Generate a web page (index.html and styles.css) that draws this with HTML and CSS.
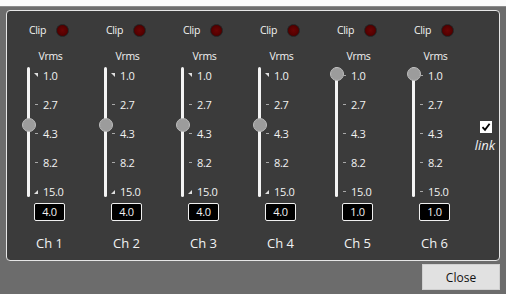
FILE: index.html
```html
<!DOCTYPE html>
<html lang="en">
<head>
    <meta charset="UTF-8">
    <title>Vrms Channels</title>
    <link rel="stylesheet" href="styles.css">
</head>
<body>
    <div class="titlebar"></div>
    <div class="frame">
        <div class="panel">
            <div class="channel">
                <div class="clip-row"><span class="clip">Clip</span><span class="led"></span></div>
                <div class="unit">Vrms</div>
                <div class="slider">
                    <div class="rail"><div class="track"></div><div class="thumb" style="top: 56px"></div></div>
                    <div class="scale">
                        <div class="tick"><span class="mark tri-top"></span><span>1.0</span></div>
                        <div class="tick"><span class="mark dash"></span><span>2.7</span></div>
                        <div class="tick"><span class="mark dash"></span><span>4.3</span></div>
                        <div class="tick"><span class="mark dash"></span><span>8.2</span></div>
                        <div class="tick"><span class="mark tri-bottom"></span><span>15.0</span></div>
                    </div>
                </div>
                <div class="value">4.0</div>
                <div class="name">Ch 1</div>
            </div>
            <div class="channel">
                <div class="clip-row"><span class="clip">Clip</span><span class="led"></span></div>
                <div class="unit">Vrms</div>
                <div class="slider">
                    <div class="rail"><div class="track"></div><div class="thumb" style="top: 56px"></div></div>
                    <div class="scale">
                        <div class="tick"><span class="mark tri-top"></span><span>1.0</span></div>
                        <div class="tick"><span class="mark dash"></span><span>2.7</span></div>
                        <div class="tick"><span class="mark dash"></span><span>4.3</span></div>
                        <div class="tick"><span class="mark dash"></span><span>8.2</span></div>
                        <div class="tick"><span class="mark tri-bottom"></span><span>15.0</span></div>
                    </div>
                </div>
                <div class="value">4.0</div>
                <div class="name">Ch 2</div>
            </div>
            <div class="channel">
                <div class="clip-row"><span class="clip">Clip</span><span class="led"></span></div>
                <div class="unit">Vrms</div>
                <div class="slider">
                    <div class="rail"><div class="track"></div><div class="thumb" style="top: 56px"></div></div>
                    <div class="scale">
                        <div class="tick"><span class="mark tri-top"></span><span>1.0</span></div>
                        <div class="tick"><span class="mark dash"></span><span>2.7</span></div>
                        <div class="tick"><span class="mark dash"></span><span>4.3</span></div>
                        <div class="tick"><span class="mark dash"></span><span>8.2</span></div>
                        <div class="tick"><span class="mark tri-bottom"></span><span>15.0</span></div>
                    </div>
                </div>
                <div class="value">4.0</div>
                <div class="name">Ch 3</div>
            </div>
            <div class="channel">
                <div class="clip-row"><span class="clip">Clip</span><span class="led"></span></div>
                <div class="unit">Vrms</div>
                <div class="slider">
                    <div class="rail"><div class="track"></div><div class="thumb" style="top: 56px"></div></div>
                    <div class="scale">
                        <div class="tick"><span class="mark tri-top"></span><span>1.0</span></div>
                        <div class="tick"><span class="mark dash"></span><span>2.7</span></div>
                        <div class="tick"><span class="mark dash"></span><span>4.3</span></div>
                        <div class="tick"><span class="mark dash"></span><span>8.2</span></div>
                        <div class="tick"><span class="mark tri-bottom"></span><span>15.0</span></div>
                    </div>
                </div>
                <div class="value">4.0</div>
                <div class="name">Ch 4</div>
            </div>
            <div class="channel">
                <div class="clip-row"><span class="clip">Clip</span><span class="led"></span></div>
                <div class="unit">Vrms</div>
                <div class="slider">
                    <div class="rail"><div class="track"></div><div class="thumb" style="top: 5px"></div></div>
                    <div class="scale">
                        <div class="tick"><span class="mark dash"></span><span>1.0</span></div>
                        <div class="tick"><span class="mark dash"></span><span>2.7</span></div>
                        <div class="tick"><span class="mark dash"></span><span>4.3</span></div>
                        <div class="tick"><span class="mark dash"></span><span>8.2</span></div>
                        <div class="tick"><span class="mark dash"></span><span>15.0</span></div>
                    </div>
                </div>
                <div class="value">1.0</div>
                <div class="name">Ch 5</div>
            </div>
            <div class="channel">
                <div class="clip-row"><span class="clip">Clip</span><span class="led"></span></div>
                <div class="unit">Vrms</div>
                <div class="slider">
                    <div class="rail"><div class="track"></div><div class="thumb" style="top: 5px"></div></div>
                    <div class="scale">
                        <div class="tick"><span class="mark dash"></span><span>1.0</span></div>
                        <div class="tick"><span class="mark dash"></span><span>2.7</span></div>
                        <div class="tick"><span class="mark dash"></span><span>4.3</span></div>
                        <div class="tick"><span class="mark dash"></span><span>8.2</span></div>
                        <div class="tick"><span class="mark dash"></span><span>15.0</span></div>
                    </div>
                </div>
                <div class="value">1.0</div>
                <div class="name">Ch 6</div>
            </div>
            <div class="link">
                <span class="checkbox">
                    <svg width="10" height="10" viewBox="0 0 10 10"><path d="M1.5 5.2 L4 7.8 L8.6 1.8" fill="none" stroke="#000" stroke-width="1.8"/></svg>
                </span>
                <span class="link-text">link</span>
            </div>
        </div>
        <div class="footer">
            <button class="close">Close</button>
        </div>
    </div>
</body>
</html>
```

FILE: styles.css
```css
body {
    margin: 0;
    background: #6c6c6c;
    font-family: "Open Sans", "Noto Sans", sans-serif;
    color: #f2f2f2;
    width: 506px;
    height: 294px;
    overflow: hidden;
}
.titlebar {
    height: 6px;
    background: #fafafa;
    border-bottom: 1px solid #8a8a8a;
}
.frame {
    padding: 3px 6px 0 6px;
}
.panel {
    height: 251px;
    box-sizing: border-box;
    background: #3b3b3b;
    border: 1px solid #e6e6e6;
    border-radius: 4px;
    padding-left: 4px;
    display: flex;
}
.channel {
    width: 77px;
    display: flex;
    flex-direction: column;
}
.clip-row {
    margin-top: 12px;
    height: 14px;
    display: flex;
    align-items: center;
    justify-content: center;
    gap: 10px;
    padding-right: 1px;
}
.clip {
    font-size: 10.5px;
    letter-spacing: -0.3px;
}
.led {
    width: 11px;
    height: 11px;
    border-radius: 50%;
    background: radial-gradient(circle at 50% 50%, #6b0303 0, #560000 55%, #300000 100%);
    border: 1px solid #242424;
}
.unit {
    margin-top: 13px;
    line-height: 12px;
    font-size: 10.5px;
    letter-spacing: -0.3px;
    text-align: center;
    padding-left: 2px;
}
.slider {
    height: 141px;
    display: flex;
    align-items: flex-start;
}
.rail {
    position: relative;
    width: 20px;
    height: 141px;
    flex: none;
}
.track {
    margin: 5px 0 0 16px;
    width: 3px;
    height: 130px;
    background: #f4f4f4;
    border-radius: 2px;
}
.thumb {
    position: absolute;
    left: 11px;
    width: 12px;
    height: 12px;
    border-radius: 50%;
    background: #9c9c9c;
    border: 1px solid #bdbdbd;
}
.scale {
    margin-top: -1.5px;
    margin-left: 2px;
    display: flex;
    flex-direction: column;
}
.tick {
    flex: none;
    height: 29px;
    display: flex;
    align-items: center;
    gap: 5px;
    font-size: 11px;
    letter-spacing: -0.3px;
}
.mark {
    width: 5px;
    height: 5px;
    position: relative;
}
.dash::after {
    content: "";
    position: absolute;
    left: 2px;
    top: 2px;
    width: 3px;
    height: 1px;
    background: #a8a8a8;
}
.tri-top::after {
    content: "";
    position: absolute;
    left: 1px;
    top: 0;
    border-top: 4px solid #e0e0e0;
    border-left: 4px solid transparent;
}
.tri-bottom::after {
    content: "";
    position: absolute;
    left: 1px;
    bottom: 0;
    border-bottom: 4px solid #e0e0e0;
    border-left: 4px solid transparent;
}
.value {
    align-self: center;
    width: 31px;
    height: 18px;
    box-sizing: border-box;
    border: 1px solid #f0f0f0;
    border-radius: 2px;
    background: #000;
    font-size: 11px;
    letter-spacing: -0.3px;
    line-height: 16px;
    text-align: center;
}
.name {
    margin-top: 14px;
    font-size: 13px;
    line-height: 16px;
    text-align: center;
}
.link {
    flex: 1;
    display: flex;
    flex-direction: column;
    align-items: center;
    padding-top: 110px;
}
.checkbox {
    width: 12px;
    height: 12px;
    background: #fff;
    display: flex;
    align-items: center;
    justify-content: center;
}
.link-text {
    font-style: italic;
    font-size: 13px;
    line-height: 16px;
    margin-top: 4px;
    margin-left: -2px;
}
.footer {
    display: flex;
    justify-content: flex-end;
    padding-top: 3px;
}
.close {
    width: 78px;
    height: 26px;
    background: #e1e1e1;
    border: 1px solid #d0d0d0;
    font-family: "Open Sans", "Noto Sans", sans-serif;
    font-size: 12px;
    color: #111;
    padding: 0;
}
```
